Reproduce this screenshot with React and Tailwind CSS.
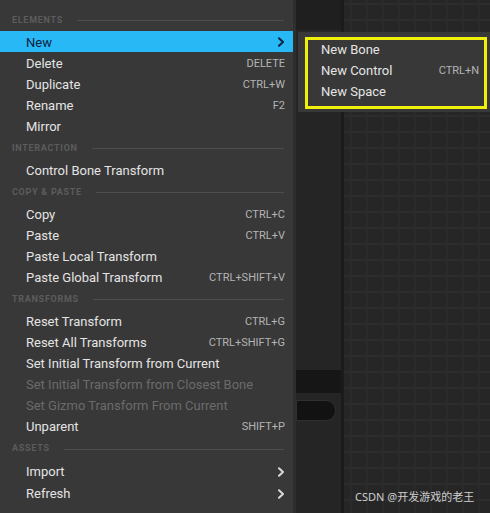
const Chevron = ({ className = '' }) => (
  <svg width="8" height="10" viewBox="0 0 8 10" className={className} fill="none">
    <path d="M2 1.2 L6 5 L2 8.8" stroke="currentColor" strokeWidth="2" strokeLinecap="round" strokeLinejoin="round" />
  </svg>
);

const Header = ({ label, tall }) => (
  <div className={`flex items-center pl-[12px] pr-[9px] pt-[2px] ${tall ? 'h-[24px]' : 'h-[23px]'}`}>
    <span className="text-[9px] font-bold tracking-[0.08em] text-[#5c5c5c]">{label}</span>
    <div className="ml-[14px] h-px flex-1 bg-[#4e4e4e]" />
  </div>
);

const Row = ({ label, shortcut, sub, active, disabled, tall }) => (
  <div
    className={`flex items-center justify-between pl-[26px] pr-[8px] pt-[1px] ${tall ? 'h-[22px]' : 'h-[21px]'} ${
      active ? 'bg-[#28b8f5] text-[#0c2440]' : disabled ? 'text-[#6b6b6b]' : 'text-[#e4e4e4]'
    }`}
  >
    <span className="text-[13px] leading-none">{label}</span>
    {shortcut && <span className="text-[11px] leading-none text-[#b4b4b4]">{shortcut}</span>}
    {sub && <Chevron className={active ? 'text-[#0c2440]' : 'text-[#d8d8d8]'} />}
  </div>
);

const App = () => (
  <div className="relative flex h-[513px] w-[490px] overflow-hidden bg-[#262626] font-['Roboto',sans-serif]">
    {/* main context menu */}
    <div className="w-[296px] shrink-0 border-r-[3px] border-[#2e2e2e] bg-[#383838] pt-[8px]">
      <Header label="ELEMENTS" />
      <Row label="New" sub active />
      <Row label="Delete" shortcut="DELETE" />
      <Row label="Duplicate" shortcut="CTRL+W" />
      <Row label="Rename" shortcut="F2" />
      <Row label="Mirror" />
      <Header label="INTERACTION" />
      <Row label="Control Bone Transform" />
      <Header label="COPY & PASTE" />
      <Row label="Copy" shortcut="CTRL+C" />
      <Row label="Paste" shortcut="CTRL+V" />
      <Row label="Paste Local Transform" />
      <Row label="Paste Global Transform" shortcut="CTRL+SHIFT+V" />
      <Header label="TRANSFORMS" />
      <Row label="Reset Transform" shortcut="CTRL+G" />
      <Row label="Reset All Transforms" shortcut="CTRL+SHIFT+G" />
      <Row label="Set Initial Transform from Current" />
      <Row label="Set Initial Transform from Closest Bone" disabled />
      <Row label="Set Gizmo Transform From Current" disabled />
      <Row label="Unparent" shortcut="SHIFT+P" />
      <Header label="ASSETS" tall />
      <Row label="Import" sub tall />
      <Row label="Refresh" sub tall />
    </div>

    {/* panel behind the menu */}
    <div className="flex w-[48px] shrink-0 flex-col border-r-[3px] border-[#1b1b1b] bg-[#252525]">
      <div className="h-[30px] bg-[#1f1f1f]" />
      <div className="mt-[340px] h-[23px] bg-[#161616]" />
      <div className="mt-[7px] h-[21px] w-[40px] rounded-r-[10px] border border-[#303030] bg-[#121212]" />
    </div>

    {/* graph area */}
    <div className="flex-1 bg-[#262626] [background-image:linear-gradient(#2c2c2c_2px,transparent_2px),linear-gradient(90deg,#2a2a2a_2px,transparent_2px)] [background-size:16px_16px] [background-position:6px_3px]" />

    {/* sub menu */}
    <div className="absolute left-[298px] top-[32px] h-[80px] w-[192px] bg-[#383838] pt-[6px]">
      {[
        ['New Bone', ''],
        ['New Control', 'CTRL+N'],
        ['New Space', ''],
      ].map(([label, key]) => (
        <div key={label} className="flex h-[21px] items-center justify-between pl-[23px] pr-[11px] pt-[1px] text-[#e4e4e4]">
          <span className="text-[13px] leading-none">{label}</span>
          {key && <span className="text-[11px] leading-none text-[#b4b4b4]">{key}</span>}
        </div>
      ))}
    </div>
    <div className="absolute left-[305px] top-[37px] h-[72px] w-[182px] border-[3px] border-[#f0f00a]" />

    <div className="absolute left-[355px] top-[489px] font-['Noto_Sans','Noto_Sans_CJK_SC',sans-serif] text-[11px] text-[#cfcfcf]">
      CSDN @开发游戏的老王
    </div>
  </div>
);

export default App;
